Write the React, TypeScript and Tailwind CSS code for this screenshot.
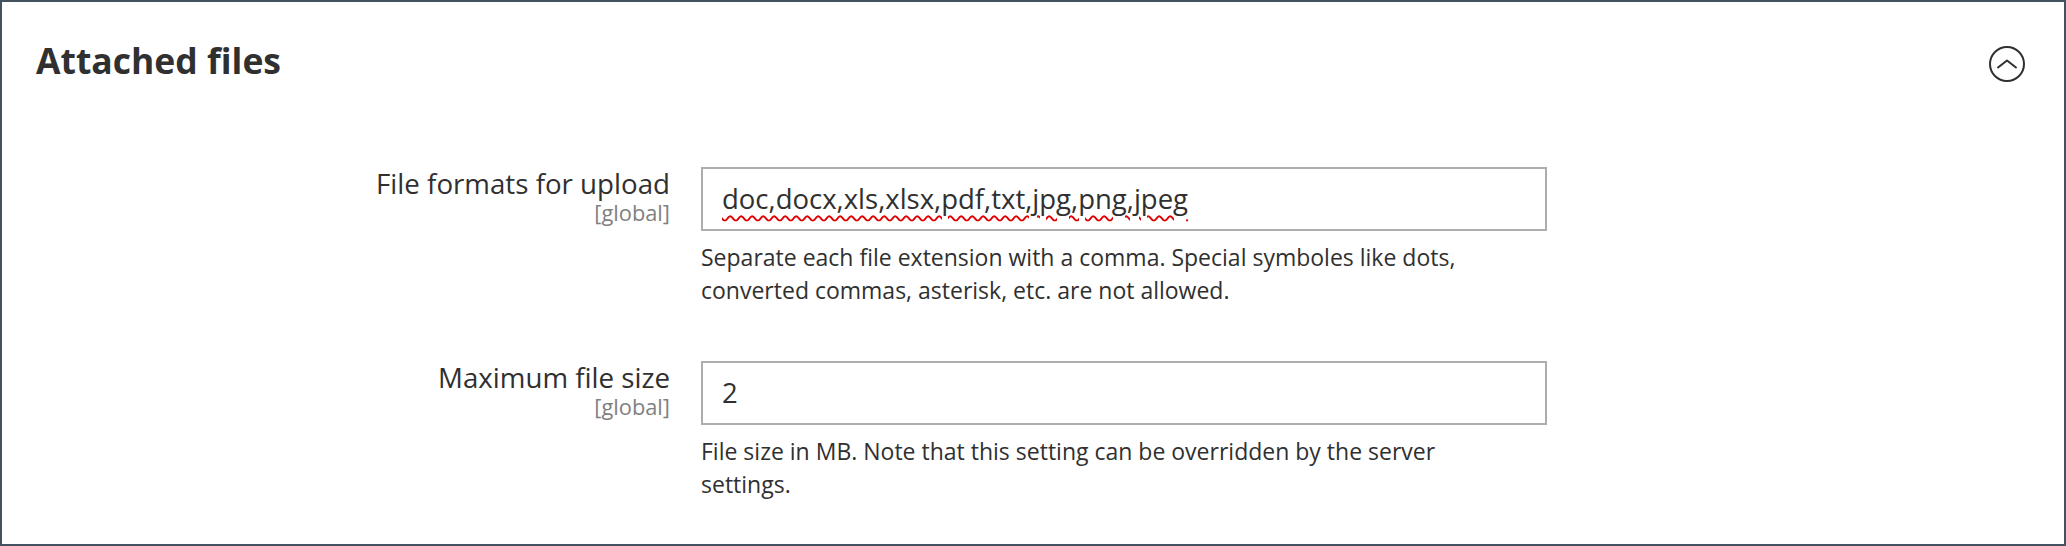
import React from "react";

function CollapseIcon() {
  return (
    <svg width="36" height="36" viewBox="0 0 36 36" fill="none" className="block">
      <circle cx="18" cy="18" r="17" stroke="#303030" strokeWidth="2" />
      <polyline
        points="9,21.5 18,14.5 27,21.5"
        stroke="#303030"
        strokeWidth="2"
        strokeLinecap="round"
        strokeLinejoin="round"
        fill="none"
      />
    </svg>
  );
}

type RowProps = {
  label: string;
  value: string;
  wavy?: boolean;
  note: string;
  className?: string;
};

function Row({ label, value, wavy, note, className }: RowProps) {
  return (
    <div className={"grid grid-cols-[668px_846px] gap-x-[31px] " + (className ?? "")}>
      <div className="flex flex-col items-end">
        <div className="text-[27.7px] leading-[33px] text-[#303030]">{label}</div>
        <div className="text-[21.8px] leading-[26px] text-[#808080]">[global]</div>
      </div>
      <div className="flex flex-col">
        <div className="h-[64px] border-2 border-[#adadad] bg-white flex items-center pl-[19px]">
          <span
            className={
              "text-[27.5px] leading-[34px] text-[#303030] " +
              (wavy ? "underline decoration-wavy decoration-[#e00000] decoration-[1.5px] underline-offset-[6px]" : "")
            }
          >
            {value}
          </span>
        </div>
        <div className="mt-[10px] w-[800px] text-[23px] leading-[33px] text-[#303030]">{note}</div>
      </div>
    </div>
  );
}

export default function App() {
  return (
    <div
      className="w-[2066px] h-[546px] box-border border-2 border-[#42535f] bg-white overflow-hidden"
      style={{ fontFamily: '"Open Sans", "Noto Sans", sans-serif' }}
    >
      <div className="flex items-start justify-between pl-[34px] pr-[39px] pt-[37.5px]">
        <h2 className="text-[35.5px] leading-[40px] font-bold text-[#303030]">Attached files</h2>
        <div className="mt-[6px]">
          <CollapseIcon />
        </div>
      </div>
      <div className="pt-[85px]">
        <Row
          label="File formats for upload"
          value="doc,docx,xls,xlsx,pdf,txt,jpg,png,jpeg"
          wavy
          note="Separate each file extension with a comma. Special symboles like dots, converted commas, asterisk, etc. are not allowed."
        />
        <Row
          className="mt-[54px]"
          label="Maximum file size"
          value="2"
          note="File size in MB. Note that this setting can be overridden by the server settings."
        />
      </div>
    </div>
  );
}
